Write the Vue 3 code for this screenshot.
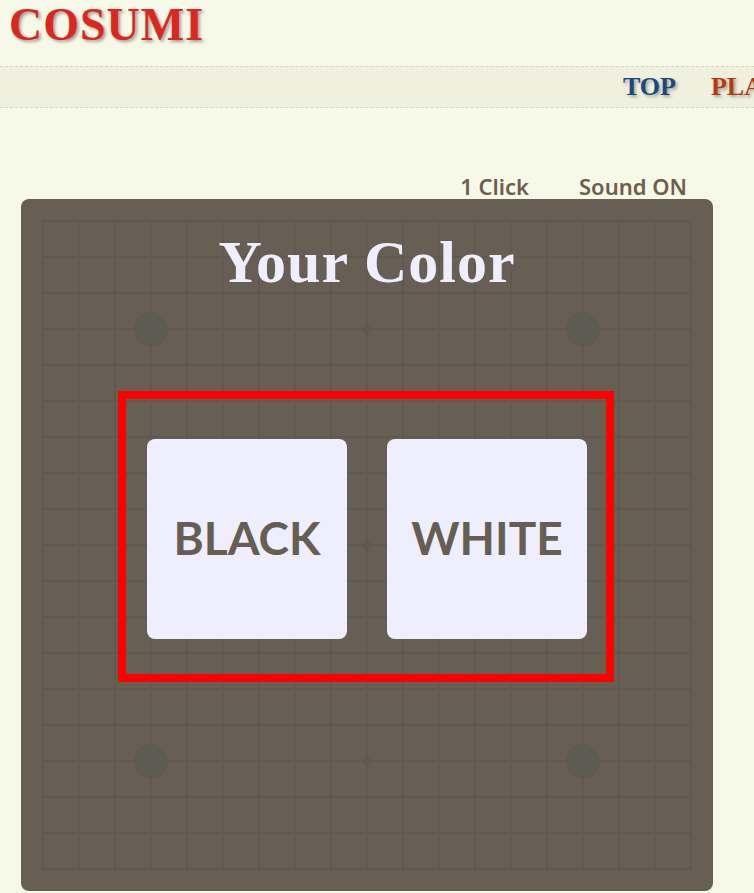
<script setup>
const lines = Array.from({ length: 19 }, (_, i) => 22 + i * 36)
const stars = [[130, 130], [562, 130], [130, 562], [562, 562]]
const dots = [[346, 130], [130, 346], [346, 346], [562, 346], [346, 562]]
const navItems = [
  { label: 'TOP', cls: 'top' },
  { label: 'PLAY', cls: 'play' }
]
</script>

<template>
  <div class="page">
    <header class="header">
      <h1 class="logo">COSUMI</h1>
    </header>
    <nav class="nav">
      <a v-for="n in navItems" :key="n.label" class="nav-item" :class="n.cls">{{ n.label }}</a>
    </nav>
    <div class="options">
      <span>1 Click</span>
      <span>Sound ON</span>
    </div>
    <main class="board">
      <svg class="grid" width="692" height="692" viewBox="0 0 692 692">
        <g stroke="#5d5a50" stroke-width="2">
          <line v-for="p in lines" :key="'v' + p" :x1="p" y1="21" :x2="p" y2="671" />
          <line v-for="p in lines" :key="'h' + p" x1="21" :y1="p" x2="671" :y2="p" />
        </g>
        <circle v-for="s in stars" :key="s.join()" :cx="s[0]" :cy="s[1]" r="17" fill="#5e5b53" />
        <circle v-for="d in dots" :key="d.join()" :cx="d[0]" :cy="d[1]" r="4" fill="#5d5a50" />
      </svg>
      <div class="content">
        <h2 class="title">Your Color</h2>
        <div class="choice">
          <button class="btn">BLACK</button>
          <button class="btn">WHITE</button>
        </div>
      </div>
    </main>
  </div>
</template>

<style>
html, body { margin: 0; background: #f6f9e8; overflow: hidden; }
</style>

<style scoped>
.page {
  width: 754px;
  height: 893px;
  overflow: hidden;
  background: #f6f9e8;
}
.header { height: 66px; padding-left: 9px; }
.logo {
  margin: 0;
  padding-top: 1px;
  font: bold 46px/48px "Liberation Serif", serif;
  letter-spacing: 1px;
  color: #dc2720;
  text-shadow: 2px 2px 3px rgba(90, 90, 90, 0.55);
}
.nav {
  height: 40px;
  display: flex;
  gap: 35px;
  padding-left: 623px;
  align-items: center;
  white-space: nowrap;
  overflow: hidden;
  background: #f0f0df;
  border-top: 1px dashed #d8d8c8;
  border-bottom: 1px dashed #d8d8c8;
  font: bold 26px/38px "Liberation Serif", serif;
  text-shadow: 2px 2px 3px rgba(90, 90, 90, 0.5);
}
.top { color: #164a80; }
.play { color: #b43a10; }
.options {
  height: 91px;
  display: flex;
  justify-content: flex-end;
  align-items: flex-end;
  gap: 50px;
  padding: 0 67px 1px 0;
  box-sizing: border-box;
  font: 600 22px/24px "Noto Sans", sans-serif;
  color: #6d5f4b;
}
.board {
  position: relative;
  width: 692px;
  height: 692px;
  margin-left: 21px;
  border-radius: 8px;
  background: #675f54;
}
.grid { position: absolute; inset: 0; }
.content {
  position: absolute;
  inset: 0;
  display: flex;
  flex-direction: column;
  align-items: center;
}
.title {
  margin: 28px 0 0;
  font: bold 60px/70px "Liberation Serif", serif;
  color: #eeeeff;
  letter-spacing: 1px;
}
.choice {
  margin: 94px 0 0;
  width: 496px;
  height: 291px;
  box-sizing: border-box;
  border: 8px solid #ff0000;
  display: flex;
  justify-content: center;
  gap: 40px;
  padding: 40px 0 0 2px;
  transform: translateX(-1px);
}
.btn {
  width: 200px;
  height: 200px;
  padding: 0 0 3px;
  border: 0;
  border-radius: 8px;
  background: #eeeeff;
  color: #665e53;
  font: 700 46px/1 Lato, sans-serif;
}
</style>
